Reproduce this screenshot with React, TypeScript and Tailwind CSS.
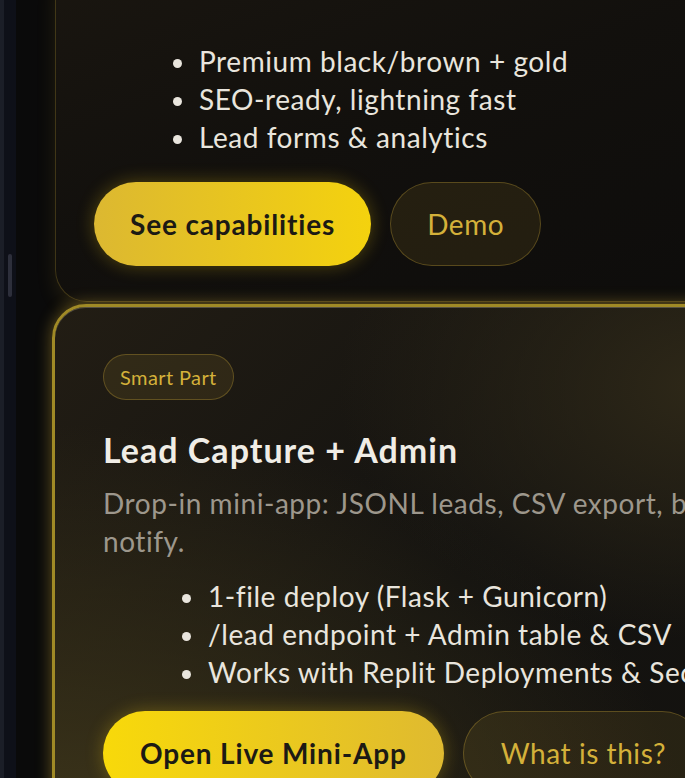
import React from "react";

const font = { fontFamily: "Lato, 'Open Sans', sans-serif" };

function Bullets({ items }: { items: string[] }) {
  return (
    <ul className="list-disc pl-[104px] text-[28px] leading-[38px] tracking-[0.02em] whitespace-nowrap text-[#e9e5dd] marker:text-[#e9e5dd]">
      {items.map((t) => (
        <li key={t} className="pl-[1px]">
          {t}
        </li>
      ))}
    </ul>
  );
}

export default function App() {
  return (
    <div className="flex h-[778px] w-[685px] overflow-hidden bg-[#0a0a0a]" style={font}>
      {/* editor edge + scrollbar */}
      <div className="flex h-full w-[16px] shrink-0">
        <div className="h-full w-[4px] bg-[#1b1e27]" />
        <div className="flex h-full w-[12px] flex-col bg-[#0e1018] pl-[4px] pt-[254px]">
          <div className="h-[43px] w-[4px] rounded-full bg-[#2d2f3b]" />
        </div>
      </div>

      <main className="-mt-[40px] flex flex-1 flex-col gap-[2px] pl-[36px]">
        {/* card 1 */}
        <section className="ml-[3px] w-[760px] shrink-0 rounded-[32px] border border-[#d4af37]/25 bg-[linear-gradient(160deg,#1a1610_0%,#12100d_45%,#0d0c0b_100%)] px-[38px] pb-[35px] pt-[81px] shadow-[0_8px_20px_rgba(212,175,55,0.12)]">
          <Bullets
            items={[
              "Premium black/brown + gold",
              "SEO-ready, lightning fast",
              "Lead forms & analytics",
            ]}
          />
          <div className="mt-[26px] flex gap-[19px]">
            <button className="h-[84px] rounded-full bg-[linear-gradient(90deg,#dcb831,#f4d20e)] px-[36px] text-[28px] font-bold tracking-[0.03em] text-[#1c1a14] shadow-[0_0_18px_rgba(240,200,20,0.3)]">
              See capabilities
            </button>
            <button className="h-[84px] rounded-full border border-[#d4af37]/30 bg-[#d4af37]/10 px-[36px] text-[28px] tracking-[0.02em] text-[#d4b13a]">
              Demo
            </button>
          </div>
        </section>

        {/* card 2 */}
        <section className="w-[820px] shrink-0 rounded-[34px] border-[3px] border-[#a08a26] bg-[radial-gradient(ellipse_at_80%_15%,#2e2818_0%,transparent_40%),radial-gradient(ellipse_at_0%_100%,#3d351a_0%,transparent_55%),linear-gradient(135deg,#221d14_0%,#131210_50%,#15130f_100%)] px-[48px] pt-[47px] shadow-[0_0_16px_rgba(212,175,55,0.45),inset_0_1px_0_rgba(120,115,100,0.6)]">
          <span className="inline-flex h-[46px] items-center rounded-full border border-[#d4af37]/30 bg-[#d4af37]/10 px-[16px] text-[20px] tracking-[0.02em] text-[#d4b13a]">
            Smart Part
          </span>
          <h2 className="mt-[28px] text-[34px] font-bold leading-[44px] tracking-[0.03em] text-[#f0ede6]">
            Lead Capture + Admin
          </h2>
          <p className="mt-[12px] whitespace-nowrap text-[28px] leading-[38px] tracking-[0.02em] text-[#9d978c]">
            Drop-in mini-app: JSONL leads, CSV export, basic auth,
            <br />
            notify.
          </p>
          <div className="mt-[17px]">
            <Bullets
              items={[
                "1-file deploy (Flask + Gunicorn)",
                "/lead endpoint + Admin table & CSV",
                "Works with Replit Deployments & Secrets",
              ]}
            />
          </div>
          <div className="mt-[20px] flex gap-[19px] pb-[40px]">
            <button className="h-[84px] rounded-full bg-[linear-gradient(90deg,#f8d90a,#dfba30)] px-[37px] text-[28px] font-bold tracking-[0.03em] text-[#1c1a14] shadow-[0_0_18px_rgba(240,200,20,0.3)]">
              Open Live Mini-App
            </button>
            <button className="h-[84px] rounded-full border border-[#d4af37]/30 bg-[#d4af37]/10 px-[37px] text-[28px] tracking-[0.02em] text-[#d4b13a]">
              What is this?
            </button>
          </div>
        </section>
      </main>
    </div>
  );
}
